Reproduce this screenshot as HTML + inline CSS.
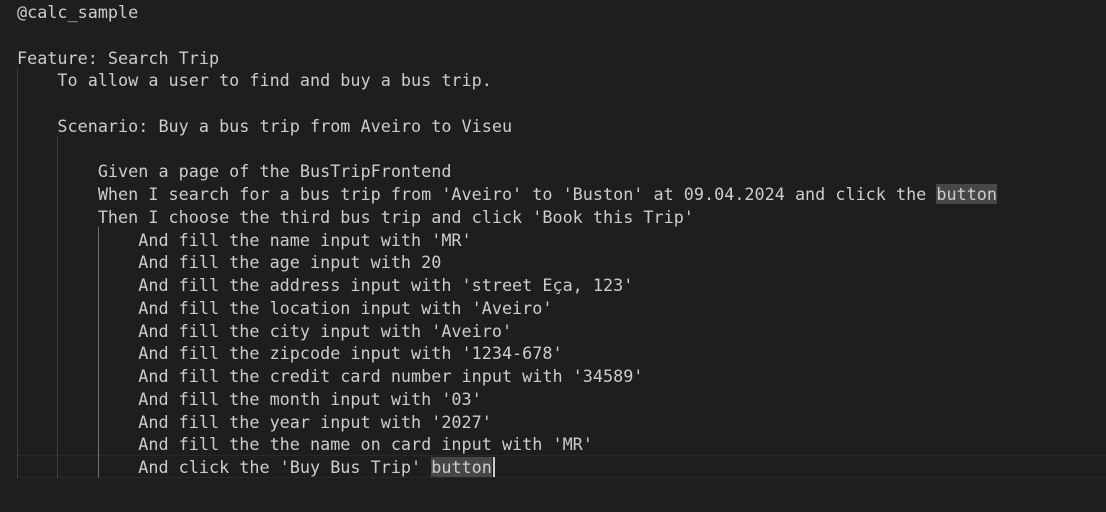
<!DOCTYPE html>
<html><head><style>
html,body{margin:0;padding:0;background:#1e1e1e;width:1106px;height:512px;overflow:hidden}
.ed{position:absolute;left:0;top:0;width:1106px;height:512px}
.l{position:absolute;left:17px;height:22.75px;line-height:22.75px;margin-top:1px;font-family:"DejaVu Sans Mono","Liberation Mono",monospace;font-size:16.8px;color:#cccccc;white-space:pre}
.g{position:absolute;width:1px;background:#404040}
.hl{background:#474747}
</style></head><body><div class="ed">
<div style="position:absolute;left:17px;top:455px;width:1089px;height:21px;border:1px solid #282828;border-right:none"></div>
<div class="g" style="left:17px;top:68px;height:410px"></div>
<div class="g" style="left:57px;top:136px;height:342px"></div>
<div class="g" style="left:98px;top:227px;height:251px;background:#707070"></div>
<div class="l" style="top:0px">@calc_sample</div>
<div class="l" style="top:45.5px">Feature: Search Trip</div>
<div class="l" style="top:68.25px">    To allow a user to find and buy a bus trip.</div>
<div class="l" style="top:113.75px">    Scenario: Buy a bus trip from Aveiro to Viseu</div>
<div class="l" style="top:159.25px">        Given a page of the BusTripFrontend</div>
<div class="l" style="top:182px">        When I search for a bus trip from 'Aveiro' to 'Buston' at 09.04.2024 and click the <span class="hl">button</span></div>
<div class="l" style="top:204.75px">        Then I choose the third bus trip and click 'Book this Trip'</div>
<div class="l" style="top:227.5px">            And fill the name input with 'MR'</div>
<div class="l" style="top:250.25px">            And fill the age input with 20</div>
<div class="l" style="top:273px">            And fill the address input with 'street Eça, 123'</div>
<div class="l" style="top:295.75px">            And fill the location input with 'Aveiro'</div>
<div class="l" style="top:318.5px">            And fill the city input with 'Aveiro'</div>
<div class="l" style="top:341.25px">            And fill the zipcode input with '1234-678'</div>
<div class="l" style="top:364px">            And fill the credit card number input with '34589'</div>
<div class="l" style="top:386.75px">            And fill the month input with '03'</div>
<div class="l" style="top:409.5px">            And fill the year input with '2027'</div>
<div class="l" style="top:432.25px">            And fill the the name on card input with 'MR'</div>
<div class="l" style="top:455px">            And click the 'Buy Bus Trip' <span class="hl">button</span></div>
<div style="position:absolute;left:493px;top:457px;width:2px;height:20px;background:#cccccc"></div>
</div></body></html>
